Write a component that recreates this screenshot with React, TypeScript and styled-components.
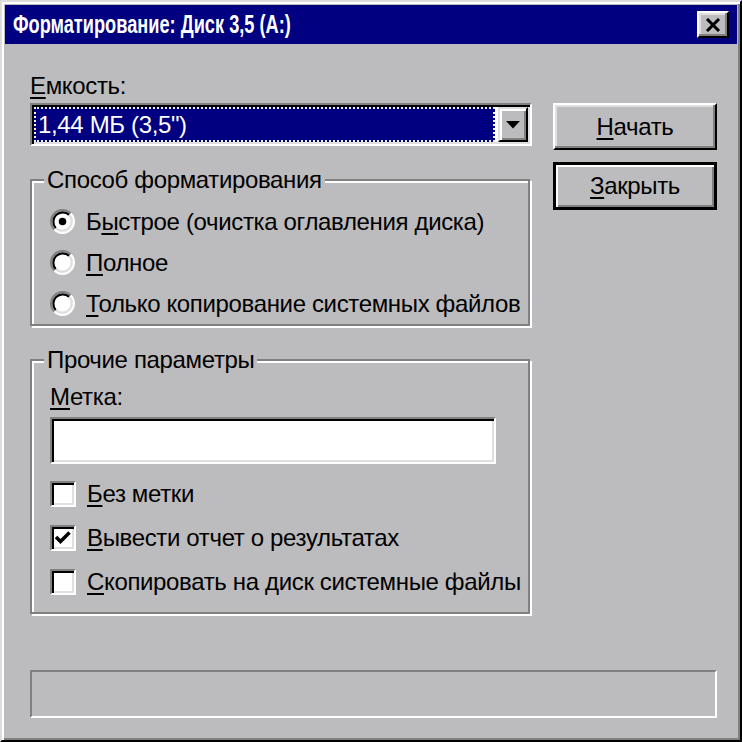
import React from 'react';
import styled, { createGlobalStyle, css } from 'styled-components';

const FACE = '#bcbbbe';

const Global = createGlobalStyle`
  html, body { margin: 0; padding: 0; }
  body {
    background: ${FACE};
    font-family: "Liberation Sans", Arial, sans-serif;
    font-size: 24px;
    letter-spacing: -0.35px;
    color: #000;
  }
  * { box-sizing: border-box; }
`;

const Window = styled.div`
  width: 742px;
  height: 742px;
  background: ${FACE};
  border: 2px solid;
  border-color: #dcdcdc #000 #000 #dcdcdc;
  box-shadow: inset 2px 2px 0 #fff, inset -2px -2px 0 #808080;
  padding: 3px;
  display: flex;
  flex-direction: column;
`;

const TitleBar = styled.div`
  height: 39px;
  background: #000080;
  display: flex;
  align-items: center;
  justify-content: space-between;
  padding: 0 8px 0 8px;
  overflow: hidden;
`;

const TitleText = styled.span`
  color: #fff;
  font-weight: bold;
  font-size: 26px;
  letter-spacing: 0;
  line-height: 39px;
  white-space: nowrap;
  display: inline-block;
  transform: scaleX(0.7);
  transform-origin: left center;
`;

const raised = css`
  background: ${FACE};
  border: 2px solid;
  border-color: #fff #000 #000 #fff;
  box-shadow: inset -2px -2px 0 #808080, inset 2px 2px 0 #dfdfdf;
`;

const sunken = css`
  background: #fff;
  border: 2px solid;
  border-color: #808080 #fff #fff #808080;
  box-shadow: inset 2px 2px 0 #000, inset -2px -2px 0 #dfdfdf;
`;

const CloseButton = styled.div`
  ${raised};
  width: 32px;
  height: 27px;
  display: flex;
  align-items: center;
  justify-content: center;
`;

const Body = styled.div`
  flex: 1;
  display: flex;
  flex-direction: column;
  padding: 30px 20px 19px 25px;
`;

const MainRow = styled.div`
  display: flex;
  align-items: flex-start;
  gap: 21px;
`;

const LeftCol = styled.div`
  width: 502px;
  display: flex;
  flex-direction: column;
`;

const RightCol = styled.div`
  width: 164px;
  display: flex;
  flex-direction: column;
  gap: 12px;
  padding-top: 29px;
`;

const FieldLabel = styled.div<{ $gap: number }>`
  line-height: 24px;
  height: 24px;
  margin-bottom: ${(p) => p.$gap}px;
  white-space: nowrap;
`;

const Key = styled.span`
  text-decoration: underline;
  text-decoration-thickness: 2px;
  text-underline-offset: 3px;
`;

const Combo = styled.div`
  ${sunken};
  height: 43px;
  padding: 2px;
  display: flex;
`;

const ComboValue = styled.div`
  flex: 1;
  margin-right: 3px;
  background: #000080;
  color: #fff;
  outline: 2px dotted #f4f4d8;
  outline-offset: -2px;
  padding-left: 4px;
  line-height: 35px;
  white-space: nowrap;
`;

const DropButton = styled.div`
  ${raised};
  border-color: #dfdfdf #000 #000 #dfdfdf;
  box-shadow: inset 2px 2px 0 #fff, inset -2px -2px 0 #808080;
  width: 30px;
  height: 35px;
  display: flex;
  align-items: center;
  justify-content: center;
`;

const GroupBox = styled.div<{ $top: number; $pt: number; $pb: number }>`
  position: relative;
  margin-top: ${(p) => p.$top}px;
  width: 500px;
  border: 2px solid #808080;
  box-shadow: inset 2px 2px 0 #fff, 2px 2px 0 #fff;
  padding: ${(p) => p.$pt}px 0 ${(p) => p.$pb}px 18px;
  display: flex;
  flex-direction: column;
`;

const GroupTitle = styled.span`
  position: absolute;
  top: -13px;
  left: 12px;
  padding: 0 3px;
  background: ${FACE};
  line-height: 24px;
  white-space: nowrap;
`;

const OptionRow = styled.div<{ $h: number }>`
  height: ${(p) => p.$h}px;
  display: flex;
  align-items: center;
  gap: 11px;
  white-space: nowrap;
`;

const TextField = styled.div`
  ${sunken};
  width: 446px;
  height: 47px;
  margin-bottom: 8px;
`;

const CheckBox = styled.div`
  ${sunken};
  width: 26px;
  height: 26px;
  flex: none;
  display: flex;
  align-items: center;
  justify-content: center;
`;

const PushButton = styled.div<{ $default?: boolean }>`
  ${raised};
  height: 47px;
  display: flex;
  align-items: center;
  justify-content: center;
  ${(p) =>
    p.$default &&
    css`
      height: 48px;
      border: 3px solid #000;
      box-shadow: inset 2px 2px 0 #fff, inset -2px -2px 0 #808080;
    `}
`;

const StatusBar = styled.div`
  margin-top: auto;
  height: 48px;
  border: 2px solid;
  border-color: #808080 #fff #fff #808080;
`;

const RadioIcon = ({ checked }: { checked?: boolean }) => (
  <svg width="25" height="25" viewBox="0 0 24 24" style={{ flex: 'none' }}>
    <circle cx="12" cy="12" r="10" fill="#fff" />
    <path d="M4.22 19.78 A11 11 0 0 1 19.78 4.22" fill="none" stroke="#808080" strokeWidth="2" />
    <path d="M19.78 4.22 A11 11 0 0 1 4.22 19.78" fill="none" stroke="#fff" strokeWidth="2" />
    <path d="M5.64 18.36 A9 9 0 0 1 18.36 5.64" fill="none" stroke="#000" strokeWidth="2" />
    <path d="M18.36 5.64 A9 9 0 0 1 5.64 18.36" fill="none" stroke="#dfdfdf" strokeWidth="2" />
    {checked && <circle cx="12" cy="12" r="3.6" fill="#000" />}
  </svg>
);

const CheckMark = () => (
  <svg width="18" height="18" viewBox="0 0 18 18">
    <path d="M2 8 L6.5 12.5 L15.5 3.5" fill="none" stroke="#000" strokeWidth="3.5" />
  </svg>
);

const CloseGlyph = () => (
  <svg width="16" height="14" viewBox="0 0 16 14">
    <path d="M2 1 L14 13 M14 1 L2 13" stroke="#000" strokeWidth="3" />
  </svg>
);

const DownArrow = () => (
  <svg width="14" height="8" viewBox="0 0 14 8">
    <path d="M0 0 H14 L7 7.5 Z" fill="#000" />
  </svg>
);

export default function App() {
  return (
    <>
      <Global />
      <Window>
        <TitleBar>
          <TitleText>Форматирование: Диск 3,5 (A:)</TitleText>
          <CloseButton>
            <CloseGlyph />
          </CloseButton>
        </TitleBar>
        <Body>
          <MainRow>
            <LeftCol>
              <FieldLabel $gap={5}>
                <Key>Е</Key>мкость:
              </FieldLabel>
              <Combo>
                <ComboValue>1,44 МБ (3,5")</ComboValue>
                <DropButton>
                  <DownArrow />
                </DropButton>
              </Combo>

              <GroupBox $top={33} $pt={20} $pb={0}>
                <GroupTitle>Способ форматирования</GroupTitle>
                <OptionRow $h={41}>
                  <RadioIcon checked />
                  <span>
                    Б<Key>ы</Key>строе (очистка оглавления диска)
                  </span>
                </OptionRow>
                <OptionRow $h={41}>
                  <RadioIcon />
                  <span>
                    <Key>П</Key>олное
                  </span>
                </OptionRow>
                <OptionRow $h={41}>
                  <RadioIcon />
                  <span>
                    <Key>Т</Key>олько копирование системных файлов
                  </span>
                </OptionRow>
              </GroupBox>

              <GroupBox $top={33} $pt={24} $pb={8}>
                <GroupTitle>Прочие параметры</GroupTitle>
                <FieldLabel $gap={8}>
                  <Key>М</Key>етка:
                </FieldLabel>
                <TextField />
                <OptionRow $h={44}>
                  <CheckBox />
                  <span>
                    <Key>Б</Key>ез метки
                  </span>
                </OptionRow>
                <OptionRow $h={44}>
                  <CheckBox>
                    <CheckMark />
                  </CheckBox>
                  <span>
                    <Key>В</Key>ывести отчет о результатах
                  </span>
                </OptionRow>
                <OptionRow $h={44}>
                  <CheckBox />
                  <span>
                    <Key>С</Key>копировать на диск системные файлы
                  </span>
                </OptionRow>
              </GroupBox>
            </LeftCol>
            <RightCol>
              <PushButton>
                <span>
                  <Key>Н</Key>ачать
                </span>
              </PushButton>
              <PushButton $default>
                <span>
                  <Key>З</Key>акрыть
                </span>
              </PushButton>
            </RightCol>
          </MainRow>
          <StatusBar />
        </Body>
      </Window>
    </>
  );
}
